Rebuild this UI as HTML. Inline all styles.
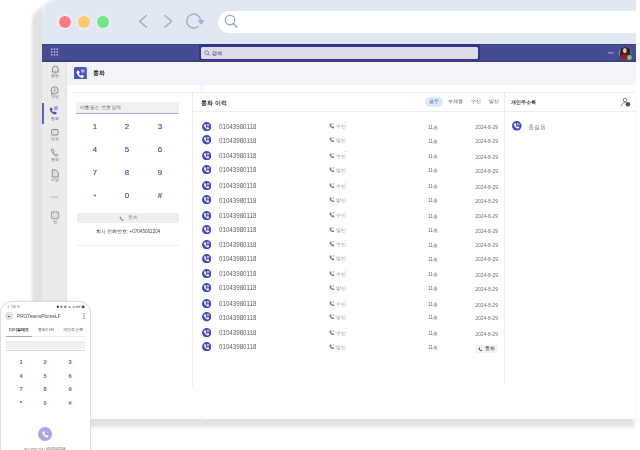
<!DOCTYPE html>
<html><head><meta charset="utf-8">
<style>
*{margin:0;padding:0;box-sizing:border-box}
html,body{width:640px;height:450px;overflow:hidden;background:#fff;font-family:"Liberation Sans",sans-serif}
.abs{position:absolute}
.t{position:absolute;white-space:nowrap;line-height:1;will-change:transform}
#win{position:absolute;left:42px;top:-1px;width:594.4px;height:420px;border-radius:14px 0 0 0;overflow:hidden;background:#fff}
#shadow{position:absolute;left:31.6px;top:6px;width:602px;height:421px;border-radius:16px 0 0 0;background:rgba(0,0,0,0.115);filter:blur(1.5px)}
#chrome{position:absolute;left:0;top:0;width:595px;height:45px;background:#e2e8f2}
.dot{position:absolute;width:12px;height:12px;border-radius:50%}
#addr{position:absolute;left:176px;top:11.6px;width:440px;height:22.3px;border-radius:11.2px;background:#fff}
#tbar{position:absolute;left:0;top:44.8px;width:595px;height:17.8px;background:#464b94;box-shadow:inset 0 1px 0 #3c408c, inset 0 -1.6px 0 #393d88}
#sbox{position:absolute;left:157px;top:0.4px;width:281px;height:16.2px;background:#30348a;border-radius:2px}
#sbox .in{position:absolute;left:2px;top:3.1px;right:2.4px;bottom:1.8px;background:#dcdbe7;border-radius:1.5px}
#rail{position:absolute;left:0;top:62.6px;width:24.9px;height:360px;background:#ebebeb;border-right:0.8px solid #e2e2e2}
#hdr{position:absolute;left:24.7px;top:62.6px;width:571px;height:23.2px;background:#f3f4f9;border-top:1px solid #fbfbfd}
</style></head><body>
<div id="all" style="position:absolute;left:0;top:0;width:640px;height:450px;filter:blur(0.3px)">
<div id="shadow"></div>
<div id="win">
  <div id="chrome">
    <div class="dot" style="left:17.4px;top:16.7px;background:#ff7985;box-shadow:0 0 0 1.5px #e8f4fa"></div>
    <div class="dot" style="left:36.2px;top:16.7px;background:#ffc86b;box-shadow:0 0 0 1.5px #e6eefa"></div>
    <div class="dot" style="left:55px;top:16.7px;background:#6ee884;box-shadow:0 0 0 1.5px #ebe8f8"></div>
    <div id="addr"></div>
  </div>
  <div id="tbar"><div id="sbox"><div class="in"></div></div></div>
  <div id="rail"></div>
  <div id="hdr"></div>
</div>
<svg class="abs" style="left:0;top:0" width="640" height="45">
<path d="M43.4 12 A12.6 12.6 0 0 1 55 0.4" fill="none" stroke="#f4f7fb" stroke-width="1.1" opacity="0.8"/>
<polyline points="146.4,15.5 139.6,21.35 146.4,27.2" fill="none" stroke="#a1b0cd" stroke-width="1.6" stroke-linecap="round" stroke-linejoin="round"/>
<polyline points="164.9,15.5 171.7,21.35 164.9,27.2" fill="none" stroke="#a1b0cd" stroke-width="1.6" stroke-linecap="round" stroke-linejoin="round"/>
<path d="M198.2 26.5 A7 7 0 1 1 200.7 20.4" fill="none" stroke="#a1b0cd" stroke-width="1.5" stroke-linecap="round"/>
<path d="M198 20.6 L204.3 20.6 L201.2 24.4 Z" fill="#a1b0cd" stroke="#a1b0cd" stroke-width="0.6" stroke-linejoin="round"/>
<circle cx="230" cy="20.1" r="4.7" fill="none" stroke="#9dadc9" stroke-width="1.4"/>
<line x1="233.4" y1="23.5" x2="237" y2="27.3" stroke="#9dadc9" stroke-width="1.5" stroke-linecap="round"/>
</svg>
<svg class="abs" style="left:0;top:0" width="640" height="62"><rect x="50.9" y="48.4" width="1.6" height="1.6" fill="#b3b6df"/><rect x="50.9" y="51.199999999999996" width="1.6" height="1.6" fill="#b3b6df"/><rect x="50.9" y="54.0" width="1.6" height="1.6" fill="#b3b6df"/><rect x="53.699999999999996" y="48.4" width="1.6" height="1.6" fill="#b3b6df"/><rect x="53.699999999999996" y="51.199999999999996" width="1.6" height="1.6" fill="#b3b6df"/><rect x="53.699999999999996" y="54.0" width="1.6" height="1.6" fill="#b3b6df"/><rect x="56.5" y="48.4" width="1.6" height="1.6" fill="#b3b6df"/><rect x="56.5" y="51.199999999999996" width="1.6" height="1.6" fill="#b3b6df"/><rect x="56.5" y="54.0" width="1.6" height="1.6" fill="#b3b6df"/>
<circle cx="206.6" cy="52.6" r="1.9" fill="none" stroke="#7f819f" stroke-width="0.9"/>
<line x1="208" y1="54" x2="209.6" y2="55.6" stroke="#7f819f" stroke-width="1"/>
<rect x="607.8" y="52.3" width="5.6" height="1.1" fill="#aeb1dc"/>
<defs><clipPath id="avc"><circle cx="625" cy="53.3" r="6.3"/></clipPath></defs>
<g clip-path="url(#avc)"><rect x="618" y="46" width="14" height="14" fill="#7d8290"/>
<path d="M619.5 60 L620.5 50 Q621 46.5 625 46.3 Q629.5 46.5 630 50 L631 60 Z" fill="#2e2220"/>
<ellipse cx="624.8" cy="50.6" rx="1.9" ry="2.6" fill="#e6c2ad"/>
<ellipse cx="624.8" cy="59.5" rx="5.8" ry="5" fill="#a51428"/></g>
<circle cx="629.4" cy="57.5" r="2.4" fill="#78d44e"/>
</svg>
<div class="t" style="left:212.3px;top:50.70px;font-size:5.2px;color:#5a5d96;font-weight:700;">검색</div>
<svg class="abs" style="left:0;top:0" width="70" height="240" fill="none" stroke="#7c7c7c" stroke-width="0.85">
<path d="M52.4 71.2 V69 a2.9 2.9 0 0 1 5.8 0 V71.2 l0.6 0.8 H51.8 z" fill="#e2e2e2"/><path d="M54.4 73 h2"/>
<circle cx="54.6" cy="90.4" r="3.6" fill="#e2e2e2"/><path d="M55.4 88.6 l-1.2 3.4" stroke-width="0.7"/><path d="M52.2 93.1 l-0.8 1.3 l1.6 -0.5"/>
<rect x="51.6" y="129.5" width="6.4" height="5.6" rx="1" fill="#d9d9d9"/><path d="M51.6 131.2 h6.4 M54.8 131.2 v3.9 M51.6 133.1 h6.4" stroke="#f2f2f2" stroke-width="0.5"/>
<path d="M52.3 148.8 c-0.9 0.4 -1.1 1.5 -0.6 2.6 c0.8 1.8 2 3.2 3.8 4.3 c0.9 0.5 2 0.4 2.3 -0.5 l-1.3 -1.1 l-1 0.6 c-0.9 -0.6 -1.6 -1.4 -2.1 -2.4 l0.7 -0.8 z"/>
<path d="M52.3 169.9 h3.3 l2.7 2.7 v4.4 h-6 z" fill="#dedede"/>
<rect x="51.4" y="211.8" width="7.2" height="6.8" rx="1.2" fill="#d5d5d5" stroke="#8a8a8a"/><path d="M55 211.8 v6.8 M51.4 215.2 h7.2" stroke="#f0f0f0" stroke-width="0.6"/>
</svg>
<svg class="abs" style="left:49.4px;top:106.4px" width="9" height="9" viewBox="0 0 10 10"><path d="M2.6 1.2c.5-.3 1.1-.1 1.4.4l.7 1.4c.2.5.1 1-.3 1.3l-.6.5c.4 1 1.2 1.9 2.2 2.4l.5-.6c.3-.4.9-.5 1.3-.3l1.4.7c.5.3.7.9.5 1.4-.4 1-1.5 1.6-2.6 1.3C4.5 9 1.9 6.4 1.3 3.9c-.3-1.1.3-2.2 1.3-2.7z" fill="#4e54c8" transform="translate(-0.3,0.6) scale(0.9)"/><rect x="6" y="0.7" width="1.5" height="1.5" fill="#5a5fd0"/><rect x="8" y="0.7" width="1.5" height="1.5" fill="#5a5fd0"/><rect x="6" y="2.7" width="1.5" height="1.5" fill="#5a5fd0"/><rect x="8" y="2.7" width="1.5" height="1.5" fill="#5a5fd0"/></svg>
<div class="abs" style="left:42px;top:103.3px;width:2.1px;height:21px;background:#5a5fd0"></div>
<div class="t" style="left:45.1px;width:20px;text-align:center;top:75.20px;font-size:3.6px;color:#7a7a7a;font-weight:400;">활동</div>
<div class="t" style="left:45.1px;width:20px;text-align:center;top:96.20px;font-size:3.6px;color:#7a7a7a;font-weight:400;">채팅</div>
<div class="t" style="left:45.1px;width:20px;text-align:center;top:117.60px;font-size:3.6px;color:#5a5fc8;font-weight:400;">통화</div>
<div class="t" style="left:45.1px;width:20px;text-align:center;top:138.10px;font-size:3.6px;color:#7a7a7a;font-weight:400;">일정</div>
<div class="t" style="left:45.1px;width:20px;text-align:center;top:158.70px;font-size:3.6px;color:#7a7a7a;font-weight:400;">통화</div>
<div class="t" style="left:45.1px;width:20px;text-align:center;top:179.40px;font-size:3.6px;color:#7a7a7a;font-weight:400;">파일</div>
<div class="t" style="left:45.1px;width:20px;text-align:center;top:221.00px;font-size:3.6px;color:#7a7a7a;font-weight:400;">앱</div>
<svg class="abs" style="left:51px;top:196px" width="9" height="3"><rect x="0.6" y="0.6" width="1.4" height="1" fill="#8a8a8a"/><rect x="3" y="0.6" width="1.4" height="1" fill="#8a8a8a"/><rect x="5.4" y="0.6" width="1.4" height="1" fill="#8a8a8a"/></svg>
<svg class="abs" style="left:74.2px;top:66.8px" width="12.8" height="12.6" viewBox="0 0 12.8 12.6"><rect width="12.8" height="12.6" rx="1.6" fill="#4b50c6"/><g transform="translate(1.6,2.6) scale(0.85)"><path d="M2.6 1.2c.5-.3 1.1-.1 1.4.4l.7 1.4c.2.5.1 1-.3 1.3l-.6.5c.4 1 1.2 1.9 2.2 2.4l.5-.6c.3-.4.9-.5 1.3-.3l1.4.7c.5.3.7.9.5 1.4-.4 1-1.5 1.6-2.6 1.3C4.5 9 1.9 6.4 1.3 3.9c-.3-1.1.3-2.2 1.3-2.7z" fill="#fff"/></g><rect x="7.1" y="2.4" width="3.4" height="3.1" fill="#aeb1ea"/></svg>
<div class="t" style="left:92.5px;top:70.00px;font-size:6.0px;color:#303030;font-weight:700;">통화</div>
<div class="abs" style="left:70px;top:91.6px;width:566px;height:0.8px;background:#efefef"></div>
<div class="abs" style="left:192.2px;top:91.8px;width:0.8px;height:294px;background:#ebebeb"></div>
<div class="abs" style="left:504.4px;top:91.8px;width:0.8px;height:293px;background:#ebebeb"></div>
<div class="abs" style="left:634.8px;top:91.8px;width:0.8px;height:327px;background:#f7f7f7"></div>
<div class="abs" style="left:200.5px;top:84.8px;width:0.6px;height:6.8px;background:#f0f0f0"></div>
<div class="abs" style="left:200.5px;top:415px;width:0.6px;height:4px;background:#f0f0f0"></div>
<div class="abs" style="left:76.4px;top:102.2px;width:102.4px;height:11.7px;background:#f1f1f1;border-bottom:1.8px solid #a9abe4"></div>
<div class="t" style="left:80.1px;top:105.55px;font-size:4.5px;color:#555;font-weight:400;transform:scaleX(0.93);transform-origin:0 50%">이름 또는 번호 입력</div>
<div class="t" style="left:89.1px;width:12px;text-align:center;top:122.65px;font-size:7.9px;color:#3a40aa;font-weight:400;-webkit-text-stroke:0.12px #3a40aa">1</div>
<div class="t" style="left:121.3px;width:12px;text-align:center;top:122.65px;font-size:7.9px;color:#3a40aa;font-weight:400;-webkit-text-stroke:0.12px #3a40aa">2</div>
<div class="t" style="left:153.6px;width:12px;text-align:center;top:122.65px;font-size:7.9px;color:#3a40aa;font-weight:400;-webkit-text-stroke:0.12px #3a40aa">3</div>
<div class="t" style="left:89.1px;width:12px;text-align:center;top:145.85px;font-size:7.9px;color:#3a40aa;font-weight:400;-webkit-text-stroke:0.12px #3a40aa">4</div>
<div class="t" style="left:121.3px;width:12px;text-align:center;top:145.85px;font-size:7.9px;color:#3a40aa;font-weight:400;-webkit-text-stroke:0.12px #3a40aa">5</div>
<div class="t" style="left:153.6px;width:12px;text-align:center;top:145.85px;font-size:7.9px;color:#3a40aa;font-weight:400;-webkit-text-stroke:0.12px #3a40aa">6</div>
<div class="t" style="left:89.1px;width:12px;text-align:center;top:169.15px;font-size:7.9px;color:#3a40aa;font-weight:400;-webkit-text-stroke:0.12px #3a40aa">7</div>
<div class="t" style="left:121.3px;width:12px;text-align:center;top:169.15px;font-size:7.9px;color:#3a40aa;font-weight:400;-webkit-text-stroke:0.12px #3a40aa">8</div>
<div class="t" style="left:153.6px;width:12px;text-align:center;top:169.15px;font-size:7.9px;color:#3a40aa;font-weight:400;-webkit-text-stroke:0.12px #3a40aa">9</div>
<div class="t" style="left:90.1px;width:10px;text-align:center;top:192.70px;font-size:7.4px;color:#3f45ad;font-weight:400;">*</div>
<div class="t" style="left:121.3px;width:12px;text-align:center;top:192.25px;font-size:7.9px;color:#3a40aa;font-weight:400;-webkit-text-stroke:0.12px #3a40aa">0</div>
<div class="t" style="left:153.6px;width:12px;text-align:center;top:192.25px;font-size:7.9px;color:#3a40aa;font-weight:400;-webkit-text-stroke:0.12px #3a40aa">#</div>
<div class="abs" style="left:76.5px;top:213.3px;width:102.6px;height:10px;background:#efefef"></div>
<svg class="abs" style="left:119.3px;top:215.6px" width="5" height="5" viewBox="0 0 10 10"><path d="M2.6 1.2c.5-.3 1.1-.1 1.4.4l.7 1.4c.2.5.1 1-.3 1.3l-.6.5c.4 1 1.2 1.9 2.2 2.4l.5-.6c.3-.4.9-.5 1.3-.3l1.4.7c.5.3.7.9.5 1.4-.4 1-1.5 1.6-2.6 1.3C4.5 9 1.9 6.4 1.3 3.9c-.3-1.1.3-2.2 1.3-2.7z" fill="#9a9a9a"/></svg>
<div class="t" style="left:128.0px;top:216.20px;font-size:4.6px;color:#9a9a9a;font-weight:400;">통화</div>
<div class="t" style="left:77.8px;width:100px;text-align:center;top:230.00px;font-size:4.6px;color:#4a4a4a;font-weight:400;">회사 전화번호: +07045062204</div>
<div class="abs" style="left:76.5px;top:245px;width:102.6px;height:0.7px;background:#ececec"></div>
<div class="t" style="left:201.3px;top:100.60px;font-size:5.6px;color:#333;font-weight:700;">통화 이력</div>
<div class="abs" style="left:425.2px;top:97px;width:17.6px;height:9.9px;border-radius:5px;background:#dbe8f7"></div>
<div class="t" style="left:424.0px;width:20px;text-align:center;top:100.35px;font-size:4.7px;color:#3e4a66;font-weight:400;">모두</div>
<div class="t" style="left:445.2px;width:20px;text-align:center;top:100.35px;font-size:4.7px;color:#4a4a4a;font-weight:400;">부재중</div>
<div class="t" style="left:466.0px;width:20px;text-align:center;top:100.35px;font-size:4.7px;color:#4a4a4a;font-weight:400;">수신</div>
<div class="t" style="left:484.4px;width:20px;text-align:center;top:100.35px;font-size:4.7px;color:#4a4a4a;font-weight:400;">발신</div>
<div class="abs" style="left:193px;top:110.6px;width:311px;height:0.7px;background:#ededed"></div>
<svg class="abs" style="left:201.8px;top:121.5px" width="9.4" height="9.4" viewBox="0 0 12 12"><circle cx="6" cy="6" r="6" fill="#474bc2"/><g transform="translate(1.6,1.9) scale(0.78)"><path d="M2.6 1.2c.5-.3 1.1-.1 1.4.4l.7 1.4c.2.5.1 1-.3 1.3l-.6.5c.4 1 1.2 1.9 2.2 2.4l.5-.6c.3-.4.9-.5 1.3-.3l1.4.7c.5.3.7.9.5 1.4-.4 1-1.5 1.6-2.6 1.3C4.5 9 1.9 6.4 1.3 3.9c-.3-1.1.3-2.2 1.3-2.7z" fill="#fff"/></g><rect x="6.3" y="2.6" width="1.3" height="1.3" fill="#cfd0f5"/><rect x="7.9" y="2.6" width="1.3" height="1.3" fill="#cfd0f5"/><rect x="6.3" y="4.2" width="1.3" height="1.3" fill="#cfd0f5"/><rect x="7.9" y="4.2" width="1.3" height="1.3" fill="#cfd0f5"/></svg>
<div class="t" style="left:218.8px;top:123.90px;font-size:6.2px;color:#606060;font-weight:400;transform:scaleY(1.18)">01043980118</div>
<svg class="abs" style="left:328.6px;top:123.20px" width="5.4" height="5.4" viewBox="0 0 10 10"><path d="M2.6 1.2c.5-.3 1.1-.1 1.4.4l.7 1.4c.2.5.1 1-.3 1.3l-.6.5c.4 1 1.2 1.9 2.2 2.4l.5-.6c.3-.4.9-.5 1.3-.3l1.4.7c.5.3.7.9.5 1.4-.4 1-1.5 1.6-2.6 1.3C4.5 9 1.9 6.4 1.3 3.9c-.3-1.1.3-2.2 1.3-2.7z" fill="#808080" stroke="#808080" stroke-width="0.6"/><path d="M7 1 L9.5 1 L9.5 3.5" fill="none" stroke="#808080" stroke-width="1.2"/></svg>
<div class="t" style="left:335.6px;top:124.25px;font-size:5.1px;color:#8a8a8a;font-weight:400;">수신</div>
<div class="abs" style="left:345.3px;top:122.00px;width:0.7px;height:1.2px;background:#c4c4c4"></div>
<div class="t" style="left:428.3px;top:125.65px;font-size:4.9px;color:#6a6a6a;font-weight:400;">11초</div>
<div class="t" style="left:438.4px;width:60px;text-align:right;top:125.20px;font-size:5.0px;color:#6e6e6e;font-weight:400">2024-8-29</div>
<svg class="abs" style="left:201.8px;top:135.4px" width="9.4" height="9.4" viewBox="0 0 12 12"><circle cx="6" cy="6" r="6" fill="#474bc2"/><g transform="translate(1.6,1.9) scale(0.78)"><path d="M2.6 1.2c.5-.3 1.1-.1 1.4.4l.7 1.4c.2.5.1 1-.3 1.3l-.6.5c.4 1 1.2 1.9 2.2 2.4l.5-.6c.3-.4.9-.5 1.3-.3l1.4.7c.5.3.7.9.5 1.4-.4 1-1.5 1.6-2.6 1.3C4.5 9 1.9 6.4 1.3 3.9c-.3-1.1.3-2.2 1.3-2.7z" fill="#fff"/></g><rect x="6.3" y="2.6" width="1.3" height="1.3" fill="#cfd0f5"/><rect x="7.9" y="2.6" width="1.3" height="1.3" fill="#cfd0f5"/><rect x="6.3" y="4.2" width="1.3" height="1.3" fill="#cfd0f5"/><rect x="7.9" y="4.2" width="1.3" height="1.3" fill="#cfd0f5"/></svg>
<div class="t" style="left:218.8px;top:137.80px;font-size:6.2px;color:#606060;font-weight:400;transform:scaleY(1.18)">01043980118</div>
<svg class="abs" style="left:328.6px;top:137.10px" width="5.4" height="5.4" viewBox="0 0 10 10"><path d="M2.6 1.2c.5-.3 1.1-.1 1.4.4l.7 1.4c.2.5.1 1-.3 1.3l-.6.5c.4 1 1.2 1.9 2.2 2.4l.5-.6c.3-.4.9-.5 1.3-.3l1.4.7c.5.3.7.9.5 1.4-.4 1-1.5 1.6-2.6 1.3C4.5 9 1.9 6.4 1.3 3.9c-.3-1.1.3-2.2 1.3-2.7z" fill="#808080" stroke="#808080" stroke-width="0.6"/><path d="M7 1 L9.5 1 L9.5 3.5" fill="none" stroke="#808080" stroke-width="1.2"/></svg>
<div class="t" style="left:335.6px;top:138.15px;font-size:5.1px;color:#8a8a8a;font-weight:400;">발신</div>
<div class="t" style="left:428.3px;top:139.55px;font-size:4.9px;color:#6a6a6a;font-weight:400;">11초</div>
<div class="t" style="left:438.4px;width:60px;text-align:right;top:139.10px;font-size:5.0px;color:#6e6e6e;font-weight:400">2024-8-29</div>
<svg class="abs" style="left:201.8px;top:150.8px" width="9.4" height="9.4" viewBox="0 0 12 12"><circle cx="6" cy="6" r="6" fill="#474bc2"/><g transform="translate(1.6,1.9) scale(0.78)"><path d="M2.6 1.2c.5-.3 1.1-.1 1.4.4l.7 1.4c.2.5.1 1-.3 1.3l-.6.5c.4 1 1.2 1.9 2.2 2.4l.5-.6c.3-.4.9-.5 1.3-.3l1.4.7c.5.3.7.9.5 1.4-.4 1-1.5 1.6-2.6 1.3C4.5 9 1.9 6.4 1.3 3.9c-.3-1.1.3-2.2 1.3-2.7z" fill="#fff"/></g><rect x="6.3" y="2.6" width="1.3" height="1.3" fill="#cfd0f5"/><rect x="7.9" y="2.6" width="1.3" height="1.3" fill="#cfd0f5"/><rect x="6.3" y="4.2" width="1.3" height="1.3" fill="#cfd0f5"/><rect x="7.9" y="4.2" width="1.3" height="1.3" fill="#cfd0f5"/></svg>
<div class="t" style="left:218.8px;top:153.20px;font-size:6.2px;color:#606060;font-weight:400;transform:scaleY(1.18)">01043980118</div>
<svg class="abs" style="left:328.6px;top:152.50px" width="5.4" height="5.4" viewBox="0 0 10 10"><path d="M2.6 1.2c.5-.3 1.1-.1 1.4.4l.7 1.4c.2.5.1 1-.3 1.3l-.6.5c.4 1 1.2 1.9 2.2 2.4l.5-.6c.3-.4.9-.5 1.3-.3l1.4.7c.5.3.7.9.5 1.4-.4 1-1.5 1.6-2.6 1.3C4.5 9 1.9 6.4 1.3 3.9c-.3-1.1.3-2.2 1.3-2.7z" fill="#808080" stroke="#808080" stroke-width="0.6"/><path d="M7 1 L9.5 1 L9.5 3.5" fill="none" stroke="#808080" stroke-width="1.2"/></svg>
<div class="t" style="left:335.6px;top:153.55px;font-size:5.1px;color:#8a8a8a;font-weight:400;">수신</div>
<div class="abs" style="left:345.3px;top:151.30px;width:0.7px;height:1.2px;background:#c4c4c4"></div>
<div class="t" style="left:428.3px;top:154.95px;font-size:4.9px;color:#6a6a6a;font-weight:400;">11초</div>
<div class="t" style="left:438.4px;width:60px;text-align:right;top:154.50px;font-size:5.0px;color:#6e6e6e;font-weight:400">2024-8-29</div>
<svg class="abs" style="left:201.8px;top:165.0px" width="9.4" height="9.4" viewBox="0 0 12 12"><circle cx="6" cy="6" r="6" fill="#474bc2"/><g transform="translate(1.6,1.9) scale(0.78)"><path d="M2.6 1.2c.5-.3 1.1-.1 1.4.4l.7 1.4c.2.5.1 1-.3 1.3l-.6.5c.4 1 1.2 1.9 2.2 2.4l.5-.6c.3-.4.9-.5 1.3-.3l1.4.7c.5.3.7.9.5 1.4-.4 1-1.5 1.6-2.6 1.3C4.5 9 1.9 6.4 1.3 3.9c-.3-1.1.3-2.2 1.3-2.7z" fill="#fff"/></g><rect x="6.3" y="2.6" width="1.3" height="1.3" fill="#cfd0f5"/><rect x="7.9" y="2.6" width="1.3" height="1.3" fill="#cfd0f5"/><rect x="6.3" y="4.2" width="1.3" height="1.3" fill="#cfd0f5"/><rect x="7.9" y="4.2" width="1.3" height="1.3" fill="#cfd0f5"/></svg>
<div class="t" style="left:218.8px;top:167.40px;font-size:6.2px;color:#606060;font-weight:400;transform:scaleY(1.18)">01043980118</div>
<svg class="abs" style="left:328.6px;top:166.70px" width="5.4" height="5.4" viewBox="0 0 10 10"><path d="M2.6 1.2c.5-.3 1.1-.1 1.4.4l.7 1.4c.2.5.1 1-.3 1.3l-.6.5c.4 1 1.2 1.9 2.2 2.4l.5-.6c.3-.4.9-.5 1.3-.3l1.4.7c.5.3.7.9.5 1.4-.4 1-1.5 1.6-2.6 1.3C4.5 9 1.9 6.4 1.3 3.9c-.3-1.1.3-2.2 1.3-2.7z" fill="#808080" stroke="#808080" stroke-width="0.6"/><path d="M7 1 L9.5 1 L9.5 3.5" fill="none" stroke="#808080" stroke-width="1.2"/></svg>
<div class="t" style="left:335.6px;top:167.75px;font-size:5.1px;color:#8a8a8a;font-weight:400;">발신</div>
<div class="t" style="left:428.3px;top:169.15px;font-size:4.9px;color:#6a6a6a;font-weight:400;">11초</div>
<div class="t" style="left:438.4px;width:60px;text-align:right;top:168.70px;font-size:5.0px;color:#6e6e6e;font-weight:400">2024-8-29</div>
<svg class="abs" style="left:201.8px;top:181.0px" width="9.4" height="9.4" viewBox="0 0 12 12"><circle cx="6" cy="6" r="6" fill="#474bc2"/><g transform="translate(1.6,1.9) scale(0.78)"><path d="M2.6 1.2c.5-.3 1.1-.1 1.4.4l.7 1.4c.2.5.1 1-.3 1.3l-.6.5c.4 1 1.2 1.9 2.2 2.4l.5-.6c.3-.4.9-.5 1.3-.3l1.4.7c.5.3.7.9.5 1.4-.4 1-1.5 1.6-2.6 1.3C4.5 9 1.9 6.4 1.3 3.9c-.3-1.1.3-2.2 1.3-2.7z" fill="#fff"/></g><rect x="6.3" y="2.6" width="1.3" height="1.3" fill="#cfd0f5"/><rect x="7.9" y="2.6" width="1.3" height="1.3" fill="#cfd0f5"/><rect x="6.3" y="4.2" width="1.3" height="1.3" fill="#cfd0f5"/><rect x="7.9" y="4.2" width="1.3" height="1.3" fill="#cfd0f5"/></svg>
<div class="t" style="left:218.8px;top:183.40px;font-size:6.2px;color:#606060;font-weight:400;transform:scaleY(1.18)">01043980118</div>
<svg class="abs" style="left:328.6px;top:182.70px" width="5.4" height="5.4" viewBox="0 0 10 10"><path d="M2.6 1.2c.5-.3 1.1-.1 1.4.4l.7 1.4c.2.5.1 1-.3 1.3l-.6.5c.4 1 1.2 1.9 2.2 2.4l.5-.6c.3-.4.9-.5 1.3-.3l1.4.7c.5.3.7.9.5 1.4-.4 1-1.5 1.6-2.6 1.3C4.5 9 1.9 6.4 1.3 3.9c-.3-1.1.3-2.2 1.3-2.7z" fill="#808080" stroke="#808080" stroke-width="0.6"/><path d="M7 1 L9.5 1 L9.5 3.5" fill="none" stroke="#808080" stroke-width="1.2"/></svg>
<div class="t" style="left:335.6px;top:183.75px;font-size:5.1px;color:#8a8a8a;font-weight:400;">수신</div>
<div class="abs" style="left:345.3px;top:181.50px;width:0.7px;height:1.2px;background:#c4c4c4"></div>
<div class="t" style="left:428.3px;top:185.15px;font-size:4.9px;color:#6a6a6a;font-weight:400;">11초</div>
<div class="t" style="left:438.4px;width:60px;text-align:right;top:184.70px;font-size:5.0px;color:#6e6e6e;font-weight:400">2024-8-29</div>
<svg class="abs" style="left:201.8px;top:195.10000000000002px" width="9.4" height="9.4" viewBox="0 0 12 12"><circle cx="6" cy="6" r="6" fill="#474bc2"/><g transform="translate(1.6,1.9) scale(0.78)"><path d="M2.6 1.2c.5-.3 1.1-.1 1.4.4l.7 1.4c.2.5.1 1-.3 1.3l-.6.5c.4 1 1.2 1.9 2.2 2.4l.5-.6c.3-.4.9-.5 1.3-.3l1.4.7c.5.3.7.9.5 1.4-.4 1-1.5 1.6-2.6 1.3C4.5 9 1.9 6.4 1.3 3.9c-.3-1.1.3-2.2 1.3-2.7z" fill="#fff"/></g><rect x="6.3" y="2.6" width="1.3" height="1.3" fill="#cfd0f5"/><rect x="7.9" y="2.6" width="1.3" height="1.3" fill="#cfd0f5"/><rect x="6.3" y="4.2" width="1.3" height="1.3" fill="#cfd0f5"/><rect x="7.9" y="4.2" width="1.3" height="1.3" fill="#cfd0f5"/></svg>
<div class="t" style="left:218.8px;top:197.50px;font-size:6.2px;color:#606060;font-weight:400;transform:scaleY(1.18)">01043980118</div>
<svg class="abs" style="left:328.6px;top:196.80px" width="5.4" height="5.4" viewBox="0 0 10 10"><path d="M2.6 1.2c.5-.3 1.1-.1 1.4.4l.7 1.4c.2.5.1 1-.3 1.3l-.6.5c.4 1 1.2 1.9 2.2 2.4l.5-.6c.3-.4.9-.5 1.3-.3l1.4.7c.5.3.7.9.5 1.4-.4 1-1.5 1.6-2.6 1.3C4.5 9 1.9 6.4 1.3 3.9c-.3-1.1.3-2.2 1.3-2.7z" fill="#808080" stroke="#808080" stroke-width="0.6"/><path d="M7 1 L9.5 1 L9.5 3.5" fill="none" stroke="#808080" stroke-width="1.2"/></svg>
<div class="t" style="left:335.6px;top:197.85px;font-size:5.1px;color:#8a8a8a;font-weight:400;">발신</div>
<div class="t" style="left:428.3px;top:199.25px;font-size:4.9px;color:#6a6a6a;font-weight:400;">11초</div>
<div class="t" style="left:438.4px;width:60px;text-align:right;top:198.80px;font-size:5.0px;color:#6e6e6e;font-weight:400">2024-8-29</div>
<svg class="abs" style="left:201.8px;top:210.5px" width="9.4" height="9.4" viewBox="0 0 12 12"><circle cx="6" cy="6" r="6" fill="#474bc2"/><g transform="translate(1.6,1.9) scale(0.78)"><path d="M2.6 1.2c.5-.3 1.1-.1 1.4.4l.7 1.4c.2.5.1 1-.3 1.3l-.6.5c.4 1 1.2 1.9 2.2 2.4l.5-.6c.3-.4.9-.5 1.3-.3l1.4.7c.5.3.7.9.5 1.4-.4 1-1.5 1.6-2.6 1.3C4.5 9 1.9 6.4 1.3 3.9c-.3-1.1.3-2.2 1.3-2.7z" fill="#fff"/></g><rect x="6.3" y="2.6" width="1.3" height="1.3" fill="#cfd0f5"/><rect x="7.9" y="2.6" width="1.3" height="1.3" fill="#cfd0f5"/><rect x="6.3" y="4.2" width="1.3" height="1.3" fill="#cfd0f5"/><rect x="7.9" y="4.2" width="1.3" height="1.3" fill="#cfd0f5"/></svg>
<div class="t" style="left:218.8px;top:212.90px;font-size:6.2px;color:#606060;font-weight:400;transform:scaleY(1.18)">01043980118</div>
<svg class="abs" style="left:328.6px;top:212.20px" width="5.4" height="5.4" viewBox="0 0 10 10"><path d="M2.6 1.2c.5-.3 1.1-.1 1.4.4l.7 1.4c.2.5.1 1-.3 1.3l-.6.5c.4 1 1.2 1.9 2.2 2.4l.5-.6c.3-.4.9-.5 1.3-.3l1.4.7c.5.3.7.9.5 1.4-.4 1-1.5 1.6-2.6 1.3C4.5 9 1.9 6.4 1.3 3.9c-.3-1.1.3-2.2 1.3-2.7z" fill="#808080" stroke="#808080" stroke-width="0.6"/><path d="M7 1 L9.5 1 L9.5 3.5" fill="none" stroke="#808080" stroke-width="1.2"/></svg>
<div class="t" style="left:335.6px;top:213.25px;font-size:5.1px;color:#8a8a8a;font-weight:400;">수신</div>
<div class="abs" style="left:345.3px;top:211.00px;width:0.7px;height:1.2px;background:#c4c4c4"></div>
<div class="t" style="left:428.3px;top:214.65px;font-size:4.9px;color:#6a6a6a;font-weight:400;">11초</div>
<div class="t" style="left:438.4px;width:60px;text-align:right;top:214.20px;font-size:5.0px;color:#6e6e6e;font-weight:400">2024-8-29</div>
<svg class="abs" style="left:201.8px;top:224.8px" width="9.4" height="9.4" viewBox="0 0 12 12"><circle cx="6" cy="6" r="6" fill="#474bc2"/><g transform="translate(1.6,1.9) scale(0.78)"><path d="M2.6 1.2c.5-.3 1.1-.1 1.4.4l.7 1.4c.2.5.1 1-.3 1.3l-.6.5c.4 1 1.2 1.9 2.2 2.4l.5-.6c.3-.4.9-.5 1.3-.3l1.4.7c.5.3.7.9.5 1.4-.4 1-1.5 1.6-2.6 1.3C4.5 9 1.9 6.4 1.3 3.9c-.3-1.1.3-2.2 1.3-2.7z" fill="#fff"/></g><rect x="6.3" y="2.6" width="1.3" height="1.3" fill="#cfd0f5"/><rect x="7.9" y="2.6" width="1.3" height="1.3" fill="#cfd0f5"/><rect x="6.3" y="4.2" width="1.3" height="1.3" fill="#cfd0f5"/><rect x="7.9" y="4.2" width="1.3" height="1.3" fill="#cfd0f5"/></svg>
<div class="t" style="left:218.8px;top:227.20px;font-size:6.2px;color:#606060;font-weight:400;transform:scaleY(1.18)">01043980118</div>
<svg class="abs" style="left:328.6px;top:226.50px" width="5.4" height="5.4" viewBox="0 0 10 10"><path d="M2.6 1.2c.5-.3 1.1-.1 1.4.4l.7 1.4c.2.5.1 1-.3 1.3l-.6.5c.4 1 1.2 1.9 2.2 2.4l.5-.6c.3-.4.9-.5 1.3-.3l1.4.7c.5.3.7.9.5 1.4-.4 1-1.5 1.6-2.6 1.3C4.5 9 1.9 6.4 1.3 3.9c-.3-1.1.3-2.2 1.3-2.7z" fill="#808080" stroke="#808080" stroke-width="0.6"/><path d="M7 1 L9.5 1 L9.5 3.5" fill="none" stroke="#808080" stroke-width="1.2"/></svg>
<div class="t" style="left:335.6px;top:227.55px;font-size:5.1px;color:#8a8a8a;font-weight:400;">발신</div>
<div class="t" style="left:428.3px;top:228.95px;font-size:4.9px;color:#6a6a6a;font-weight:400;">11초</div>
<div class="t" style="left:438.4px;width:60px;text-align:right;top:228.50px;font-size:5.0px;color:#6e6e6e;font-weight:400">2024-8-29</div>
<svg class="abs" style="left:201.8px;top:239.60000000000002px" width="9.4" height="9.4" viewBox="0 0 12 12"><circle cx="6" cy="6" r="6" fill="#474bc2"/><g transform="translate(1.6,1.9) scale(0.78)"><path d="M2.6 1.2c.5-.3 1.1-.1 1.4.4l.7 1.4c.2.5.1 1-.3 1.3l-.6.5c.4 1 1.2 1.9 2.2 2.4l.5-.6c.3-.4.9-.5 1.3-.3l1.4.7c.5.3.7.9.5 1.4-.4 1-1.5 1.6-2.6 1.3C4.5 9 1.9 6.4 1.3 3.9c-.3-1.1.3-2.2 1.3-2.7z" fill="#fff"/></g><rect x="6.3" y="2.6" width="1.3" height="1.3" fill="#cfd0f5"/><rect x="7.9" y="2.6" width="1.3" height="1.3" fill="#cfd0f5"/><rect x="6.3" y="4.2" width="1.3" height="1.3" fill="#cfd0f5"/><rect x="7.9" y="4.2" width="1.3" height="1.3" fill="#cfd0f5"/></svg>
<div class="t" style="left:218.8px;top:242.00px;font-size:6.2px;color:#606060;font-weight:400;transform:scaleY(1.18)">01043980118</div>
<svg class="abs" style="left:328.6px;top:241.30px" width="5.4" height="5.4" viewBox="0 0 10 10"><path d="M2.6 1.2c.5-.3 1.1-.1 1.4.4l.7 1.4c.2.5.1 1-.3 1.3l-.6.5c.4 1 1.2 1.9 2.2 2.4l.5-.6c.3-.4.9-.5 1.3-.3l1.4.7c.5.3.7.9.5 1.4-.4 1-1.5 1.6-2.6 1.3C4.5 9 1.9 6.4 1.3 3.9c-.3-1.1.3-2.2 1.3-2.7z" fill="#808080" stroke="#808080" stroke-width="0.6"/><path d="M7 1 L9.5 1 L9.5 3.5" fill="none" stroke="#808080" stroke-width="1.2"/></svg>
<div class="t" style="left:335.6px;top:242.35px;font-size:5.1px;color:#8a8a8a;font-weight:400;">수신</div>
<div class="abs" style="left:345.3px;top:240.10px;width:0.7px;height:1.2px;background:#c4c4c4"></div>
<div class="t" style="left:428.3px;top:243.75px;font-size:4.9px;color:#6a6a6a;font-weight:400;">11초</div>
<div class="t" style="left:438.4px;width:60px;text-align:right;top:243.30px;font-size:5.0px;color:#6e6e6e;font-weight:400">2024-8-29</div>
<svg class="abs" style="left:201.8px;top:253.60000000000002px" width="9.4" height="9.4" viewBox="0 0 12 12"><circle cx="6" cy="6" r="6" fill="#474bc2"/><g transform="translate(1.6,1.9) scale(0.78)"><path d="M2.6 1.2c.5-.3 1.1-.1 1.4.4l.7 1.4c.2.5.1 1-.3 1.3l-.6.5c.4 1 1.2 1.9 2.2 2.4l.5-.6c.3-.4.9-.5 1.3-.3l1.4.7c.5.3.7.9.5 1.4-.4 1-1.5 1.6-2.6 1.3C4.5 9 1.9 6.4 1.3 3.9c-.3-1.1.3-2.2 1.3-2.7z" fill="#fff"/></g><rect x="6.3" y="2.6" width="1.3" height="1.3" fill="#cfd0f5"/><rect x="7.9" y="2.6" width="1.3" height="1.3" fill="#cfd0f5"/><rect x="6.3" y="4.2" width="1.3" height="1.3" fill="#cfd0f5"/><rect x="7.9" y="4.2" width="1.3" height="1.3" fill="#cfd0f5"/></svg>
<div class="t" style="left:218.8px;top:256.00px;font-size:6.2px;color:#606060;font-weight:400;transform:scaleY(1.18)">01043980118</div>
<svg class="abs" style="left:328.6px;top:255.30px" width="5.4" height="5.4" viewBox="0 0 10 10"><path d="M2.6 1.2c.5-.3 1.1-.1 1.4.4l.7 1.4c.2.5.1 1-.3 1.3l-.6.5c.4 1 1.2 1.9 2.2 2.4l.5-.6c.3-.4.9-.5 1.3-.3l1.4.7c.5.3.7.9.5 1.4-.4 1-1.5 1.6-2.6 1.3C4.5 9 1.9 6.4 1.3 3.9c-.3-1.1.3-2.2 1.3-2.7z" fill="#808080" stroke="#808080" stroke-width="0.6"/><path d="M7 1 L9.5 1 L9.5 3.5" fill="none" stroke="#808080" stroke-width="1.2"/></svg>
<div class="t" style="left:335.6px;top:256.35px;font-size:5.1px;color:#8a8a8a;font-weight:400;">발신</div>
<div class="t" style="left:428.3px;top:257.75px;font-size:4.9px;color:#6a6a6a;font-weight:400;">11초</div>
<div class="t" style="left:438.4px;width:60px;text-align:right;top:257.30px;font-size:5.0px;color:#6e6e6e;font-weight:400">2024-8-29</div>
<svg class="abs" style="left:201.8px;top:269.0px" width="9.4" height="9.4" viewBox="0 0 12 12"><circle cx="6" cy="6" r="6" fill="#474bc2"/><g transform="translate(1.6,1.9) scale(0.78)"><path d="M2.6 1.2c.5-.3 1.1-.1 1.4.4l.7 1.4c.2.5.1 1-.3 1.3l-.6.5c.4 1 1.2 1.9 2.2 2.4l.5-.6c.3-.4.9-.5 1.3-.3l1.4.7c.5.3.7.9.5 1.4-.4 1-1.5 1.6-2.6 1.3C4.5 9 1.9 6.4 1.3 3.9c-.3-1.1.3-2.2 1.3-2.7z" fill="#fff"/></g><rect x="6.3" y="2.6" width="1.3" height="1.3" fill="#cfd0f5"/><rect x="7.9" y="2.6" width="1.3" height="1.3" fill="#cfd0f5"/><rect x="6.3" y="4.2" width="1.3" height="1.3" fill="#cfd0f5"/><rect x="7.9" y="4.2" width="1.3" height="1.3" fill="#cfd0f5"/></svg>
<div class="t" style="left:218.8px;top:271.40px;font-size:6.2px;color:#606060;font-weight:400;transform:scaleY(1.18)">01043980118</div>
<svg class="abs" style="left:328.6px;top:270.70px" width="5.4" height="5.4" viewBox="0 0 10 10"><path d="M2.6 1.2c.5-.3 1.1-.1 1.4.4l.7 1.4c.2.5.1 1-.3 1.3l-.6.5c.4 1 1.2 1.9 2.2 2.4l.5-.6c.3-.4.9-.5 1.3-.3l1.4.7c.5.3.7.9.5 1.4-.4 1-1.5 1.6-2.6 1.3C4.5 9 1.9 6.4 1.3 3.9c-.3-1.1.3-2.2 1.3-2.7z" fill="#808080" stroke="#808080" stroke-width="0.6"/><path d="M7 1 L9.5 1 L9.5 3.5" fill="none" stroke="#808080" stroke-width="1.2"/></svg>
<div class="t" style="left:335.6px;top:271.75px;font-size:5.1px;color:#8a8a8a;font-weight:400;">수신</div>
<div class="abs" style="left:345.3px;top:269.50px;width:0.7px;height:1.2px;background:#c4c4c4"></div>
<div class="t" style="left:428.3px;top:273.15px;font-size:4.9px;color:#6a6a6a;font-weight:400;">11초</div>
<div class="t" style="left:438.4px;width:60px;text-align:right;top:272.70px;font-size:5.0px;color:#6e6e6e;font-weight:400">2024-8-29</div>
<svg class="abs" style="left:201.8px;top:282.8px" width="9.4" height="9.4" viewBox="0 0 12 12"><circle cx="6" cy="6" r="6" fill="#474bc2"/><g transform="translate(1.6,1.9) scale(0.78)"><path d="M2.6 1.2c.5-.3 1.1-.1 1.4.4l.7 1.4c.2.5.1 1-.3 1.3l-.6.5c.4 1 1.2 1.9 2.2 2.4l.5-.6c.3-.4.9-.5 1.3-.3l1.4.7c.5.3.7.9.5 1.4-.4 1-1.5 1.6-2.6 1.3C4.5 9 1.9 6.4 1.3 3.9c-.3-1.1.3-2.2 1.3-2.7z" fill="#fff"/></g><rect x="6.3" y="2.6" width="1.3" height="1.3" fill="#cfd0f5"/><rect x="7.9" y="2.6" width="1.3" height="1.3" fill="#cfd0f5"/><rect x="6.3" y="4.2" width="1.3" height="1.3" fill="#cfd0f5"/><rect x="7.9" y="4.2" width="1.3" height="1.3" fill="#cfd0f5"/></svg>
<div class="t" style="left:218.8px;top:285.20px;font-size:6.2px;color:#606060;font-weight:400;transform:scaleY(1.18)">01043980118</div>
<svg class="abs" style="left:328.6px;top:284.50px" width="5.4" height="5.4" viewBox="0 0 10 10"><path d="M2.6 1.2c.5-.3 1.1-.1 1.4.4l.7 1.4c.2.5.1 1-.3 1.3l-.6.5c.4 1 1.2 1.9 2.2 2.4l.5-.6c.3-.4.9-.5 1.3-.3l1.4.7c.5.3.7.9.5 1.4-.4 1-1.5 1.6-2.6 1.3C4.5 9 1.9 6.4 1.3 3.9c-.3-1.1.3-2.2 1.3-2.7z" fill="#808080" stroke="#808080" stroke-width="0.6"/><path d="M7 1 L9.5 1 L9.5 3.5" fill="none" stroke="#808080" stroke-width="1.2"/></svg>
<div class="t" style="left:335.6px;top:285.55px;font-size:5.1px;color:#8a8a8a;font-weight:400;">발신</div>
<div class="t" style="left:428.3px;top:286.95px;font-size:4.9px;color:#6a6a6a;font-weight:400;">11초</div>
<div class="t" style="left:438.4px;width:60px;text-align:right;top:286.50px;font-size:5.0px;color:#6e6e6e;font-weight:400">2024-8-29</div>
<svg class="abs" style="left:201.8px;top:299.0px" width="9.4" height="9.4" viewBox="0 0 12 12"><circle cx="6" cy="6" r="6" fill="#474bc2"/><g transform="translate(1.6,1.9) scale(0.78)"><path d="M2.6 1.2c.5-.3 1.1-.1 1.4.4l.7 1.4c.2.5.1 1-.3 1.3l-.6.5c.4 1 1.2 1.9 2.2 2.4l.5-.6c.3-.4.9-.5 1.3-.3l1.4.7c.5.3.7.9.5 1.4-.4 1-1.5 1.6-2.6 1.3C4.5 9 1.9 6.4 1.3 3.9c-.3-1.1.3-2.2 1.3-2.7z" fill="#fff"/></g><rect x="6.3" y="2.6" width="1.3" height="1.3" fill="#cfd0f5"/><rect x="7.9" y="2.6" width="1.3" height="1.3" fill="#cfd0f5"/><rect x="6.3" y="4.2" width="1.3" height="1.3" fill="#cfd0f5"/><rect x="7.9" y="4.2" width="1.3" height="1.3" fill="#cfd0f5"/></svg>
<div class="t" style="left:218.8px;top:301.40px;font-size:6.2px;color:#606060;font-weight:400;transform:scaleY(1.18)">01043980118</div>
<svg class="abs" style="left:328.6px;top:300.70px" width="5.4" height="5.4" viewBox="0 0 10 10"><path d="M2.6 1.2c.5-.3 1.1-.1 1.4.4l.7 1.4c.2.5.1 1-.3 1.3l-.6.5c.4 1 1.2 1.9 2.2 2.4l.5-.6c.3-.4.9-.5 1.3-.3l1.4.7c.5.3.7.9.5 1.4-.4 1-1.5 1.6-2.6 1.3C4.5 9 1.9 6.4 1.3 3.9c-.3-1.1.3-2.2 1.3-2.7z" fill="#808080" stroke="#808080" stroke-width="0.6"/><path d="M7 1 L9.5 1 L9.5 3.5" fill="none" stroke="#808080" stroke-width="1.2"/></svg>
<div class="t" style="left:335.6px;top:301.75px;font-size:5.1px;color:#8a8a8a;font-weight:400;">수신</div>
<div class="abs" style="left:345.3px;top:299.50px;width:0.7px;height:1.2px;background:#c4c4c4"></div>
<div class="t" style="left:428.3px;top:303.15px;font-size:4.9px;color:#6a6a6a;font-weight:400;">11초</div>
<div class="t" style="left:438.4px;width:60px;text-align:right;top:302.70px;font-size:5.0px;color:#6e6e6e;font-weight:400">2024-8-29</div>
<svg class="abs" style="left:201.8px;top:312.3px" width="9.4" height="9.4" viewBox="0 0 12 12"><circle cx="6" cy="6" r="6" fill="#474bc2"/><g transform="translate(1.6,1.9) scale(0.78)"><path d="M2.6 1.2c.5-.3 1.1-.1 1.4.4l.7 1.4c.2.5.1 1-.3 1.3l-.6.5c.4 1 1.2 1.9 2.2 2.4l.5-.6c.3-.4.9-.5 1.3-.3l1.4.7c.5.3.7.9.5 1.4-.4 1-1.5 1.6-2.6 1.3C4.5 9 1.9 6.4 1.3 3.9c-.3-1.1.3-2.2 1.3-2.7z" fill="#fff"/></g><rect x="6.3" y="2.6" width="1.3" height="1.3" fill="#cfd0f5"/><rect x="7.9" y="2.6" width="1.3" height="1.3" fill="#cfd0f5"/><rect x="6.3" y="4.2" width="1.3" height="1.3" fill="#cfd0f5"/><rect x="7.9" y="4.2" width="1.3" height="1.3" fill="#cfd0f5"/></svg>
<div class="t" style="left:218.8px;top:314.70px;font-size:6.2px;color:#606060;font-weight:400;transform:scaleY(1.18)">01043980118</div>
<svg class="abs" style="left:328.6px;top:314.00px" width="5.4" height="5.4" viewBox="0 0 10 10"><path d="M2.6 1.2c.5-.3 1.1-.1 1.4.4l.7 1.4c.2.5.1 1-.3 1.3l-.6.5c.4 1 1.2 1.9 2.2 2.4l.5-.6c.3-.4.9-.5 1.3-.3l1.4.7c.5.3.7.9.5 1.4-.4 1-1.5 1.6-2.6 1.3C4.5 9 1.9 6.4 1.3 3.9c-.3-1.1.3-2.2 1.3-2.7z" fill="#808080" stroke="#808080" stroke-width="0.6"/><path d="M7 1 L9.5 1 L9.5 3.5" fill="none" stroke="#808080" stroke-width="1.2"/></svg>
<div class="t" style="left:335.6px;top:315.05px;font-size:5.1px;color:#8a8a8a;font-weight:400;">발신</div>
<div class="t" style="left:428.3px;top:316.45px;font-size:4.9px;color:#6a6a6a;font-weight:400;">11초</div>
<div class="t" style="left:438.4px;width:60px;text-align:right;top:316.00px;font-size:5.0px;color:#6e6e6e;font-weight:400">2024-8-29</div>
<svg class="abs" style="left:201.8px;top:327.8px" width="9.4" height="9.4" viewBox="0 0 12 12"><circle cx="6" cy="6" r="6" fill="#474bc2"/><g transform="translate(1.6,1.9) scale(0.78)"><path d="M2.6 1.2c.5-.3 1.1-.1 1.4.4l.7 1.4c.2.5.1 1-.3 1.3l-.6.5c.4 1 1.2 1.9 2.2 2.4l.5-.6c.3-.4.9-.5 1.3-.3l1.4.7c.5.3.7.9.5 1.4-.4 1-1.5 1.6-2.6 1.3C4.5 9 1.9 6.4 1.3 3.9c-.3-1.1.3-2.2 1.3-2.7z" fill="#fff"/></g><rect x="6.3" y="2.6" width="1.3" height="1.3" fill="#cfd0f5"/><rect x="7.9" y="2.6" width="1.3" height="1.3" fill="#cfd0f5"/><rect x="6.3" y="4.2" width="1.3" height="1.3" fill="#cfd0f5"/><rect x="7.9" y="4.2" width="1.3" height="1.3" fill="#cfd0f5"/></svg>
<div class="t" style="left:218.8px;top:330.20px;font-size:6.2px;color:#606060;font-weight:400;transform:scaleY(1.18)">01043980118</div>
<svg class="abs" style="left:328.6px;top:329.50px" width="5.4" height="5.4" viewBox="0 0 10 10"><path d="M2.6 1.2c.5-.3 1.1-.1 1.4.4l.7 1.4c.2.5.1 1-.3 1.3l-.6.5c.4 1 1.2 1.9 2.2 2.4l.5-.6c.3-.4.9-.5 1.3-.3l1.4.7c.5.3.7.9.5 1.4-.4 1-1.5 1.6-2.6 1.3C4.5 9 1.9 6.4 1.3 3.9c-.3-1.1.3-2.2 1.3-2.7z" fill="#808080" stroke="#808080" stroke-width="0.6"/><path d="M7 1 L9.5 1 L9.5 3.5" fill="none" stroke="#808080" stroke-width="1.2"/></svg>
<div class="t" style="left:335.6px;top:330.55px;font-size:5.1px;color:#8a8a8a;font-weight:400;">수신</div>
<div class="abs" style="left:345.3px;top:328.30px;width:0.7px;height:1.2px;background:#c4c4c4"></div>
<div class="t" style="left:428.3px;top:331.95px;font-size:4.9px;color:#6a6a6a;font-weight:400;">11초</div>
<div class="t" style="left:438.4px;width:60px;text-align:right;top:331.50px;font-size:5.0px;color:#6e6e6e;font-weight:400">2024-8-29</div>
<svg class="abs" style="left:201.8px;top:342.0px" width="9.4" height="9.4" viewBox="0 0 12 12"><circle cx="6" cy="6" r="6" fill="#474bc2"/><g transform="translate(1.6,1.9) scale(0.78)"><path d="M2.6 1.2c.5-.3 1.1-.1 1.4.4l.7 1.4c.2.5.1 1-.3 1.3l-.6.5c.4 1 1.2 1.9 2.2 2.4l.5-.6c.3-.4.9-.5 1.3-.3l1.4.7c.5.3.7.9.5 1.4-.4 1-1.5 1.6-2.6 1.3C4.5 9 1.9 6.4 1.3 3.9c-.3-1.1.3-2.2 1.3-2.7z" fill="#fff"/></g><rect x="6.3" y="2.6" width="1.3" height="1.3" fill="#cfd0f5"/><rect x="7.9" y="2.6" width="1.3" height="1.3" fill="#cfd0f5"/><rect x="6.3" y="4.2" width="1.3" height="1.3" fill="#cfd0f5"/><rect x="7.9" y="4.2" width="1.3" height="1.3" fill="#cfd0f5"/></svg>
<div class="t" style="left:218.8px;top:344.40px;font-size:6.2px;color:#606060;font-weight:400;transform:scaleY(1.18)">01043980118</div>
<svg class="abs" style="left:328.6px;top:343.70px" width="5.4" height="5.4" viewBox="0 0 10 10"><path d="M2.6 1.2c.5-.3 1.1-.1 1.4.4l.7 1.4c.2.5.1 1-.3 1.3l-.6.5c.4 1 1.2 1.9 2.2 2.4l.5-.6c.3-.4.9-.5 1.3-.3l1.4.7c.5.3.7.9.5 1.4-.4 1-1.5 1.6-2.6 1.3C4.5 9 1.9 6.4 1.3 3.9c-.3-1.1.3-2.2 1.3-2.7z" fill="#808080" stroke="#808080" stroke-width="0.6"/><path d="M7 1 L9.5 1 L9.5 3.5" fill="none" stroke="#808080" stroke-width="1.2"/></svg>
<div class="t" style="left:335.6px;top:344.75px;font-size:5.1px;color:#8a8a8a;font-weight:400;">발신</div>
<div class="t" style="left:428.3px;top:346.15px;font-size:4.9px;color:#6a6a6a;font-weight:400;">11초</div>
<div class="abs" style="left:474.8px;top:344.70px;width:23.5px;height:8.6px;background:#f2f2f2;border-radius:1px"></div>
<svg class="abs" style="left:477.8px;top:346.50px" width="4.6" height="4.6" viewBox="0 0 10 10"><path d="M2.6 1.2c.5-.3 1.1-.1 1.4.4l.7 1.4c.2.5.1 1-.3 1.3l-.6.5c.4 1 1.2 1.9 2.2 2.4l.5-.6c.3-.4.9-.5 1.3-.3l1.4.7c.5.3.7.9.5 1.4-.4 1-1.5 1.6-2.6 1.3C4.5 9 1.9 6.4 1.3 3.9c-.3-1.1.3-2.2 1.3-2.7z" fill="#555"/></svg>
<div class="t" style="left:485px;top:346.60px;font-size:4.6px;color:#444;font-weight:400;">통화</div>
<div class="t" style="left:511px;top:100.10px;font-size:5.4px;color:#333;font-weight:700;">개인주소록</div>
<svg class="abs" style="left:0;top:90px" width="640" height="20"><circle cx="625" cy="10" r="1.8" fill="none" stroke="#6a6a6a" stroke-width="0.9"/><path d="M621.9 16.4 v-0.9 c0-1.6 1.2-2.9 3-2.9 h0.7" fill="none" stroke="#777" stroke-width="0.9"/><circle cx="627.9" cy="14.3" r="2.3" fill="#4f4f4f"/></svg>
<div class="abs" style="left:505px;top:110.6px;width:130px;height:0.7px;background:#ededed"></div>
<svg class="abs" style="left:512.2px;top:121.3px" width="9.6" height="9.6" viewBox="0 0 12 12"><circle cx="6" cy="6" r="6" fill="#474bc2"/><g transform="translate(1.6,1.9) scale(0.78)"><path d="M2.6 1.2c.5-.3 1.1-.1 1.4.4l.7 1.4c.2.5.1 1-.3 1.3l-.6.5c.4 1 1.2 1.9 2.2 2.4l.5-.6c.3-.4.9-.5 1.3-.3l1.4.7c.5.3.7.9.5 1.4-.4 1-1.5 1.6-2.6 1.3C4.5 9 1.9 6.4 1.3 3.9c-.3-1.1.3-2.2 1.3-2.7z" fill="#fff"/></g><rect x="6.3" y="2.6" width="1.3" height="1.3" fill="#cfd0f5"/><rect x="7.9" y="2.6" width="1.3" height="1.3" fill="#cfd0f5"/><rect x="6.3" y="4.2" width="1.3" height="1.3" fill="#cfd0f5"/><rect x="7.9" y="4.2" width="1.3" height="1.3" fill="#cfd0f5"/></svg>
<div class="t" style="left:528.3px;top:123.60px;font-size:6.0px;color:#7a7a7a;font-weight:400;">홍길동</div>
<div class="abs" style="left:0.3px;top:301px;width:90.6px;height:170px;border-radius:12px;background:#fff;border:1.4px solid #dcdcdc;box-shadow:0 0 3px rgba(0,0,0,0.06)"></div>
<div class="t" style="left:6.5px;top:305.80px;font-size:3.2px;color:#666;font-weight:400;">ᯤ 135 %</div>
<svg class="abs" style="left:56px;top:305px" width="32" height="4"><rect x="0.8" y="0.7" width="2" height="2.2" fill="#444"/><rect x="4.5" y="0.8" width="2" height="2" fill="#777"/><rect x="8.2" y="0.8" width="2" height="2" fill="#777"/><path d="M12 3 l1.6-2.2 l1.6 2.2z" fill="#999"/><path d="M16 3 l2.5-2.2 v2.2z" fill="#888"/><rect x="19.5" y="0.9" width="5" height="1.8" fill="#aaa"/><rect x="25.8" y="0.6" width="2.6" height="2.4" fill="#444"/></svg>
<div class="abs" style="left:4.9px;top:312.4px;width:8px;height:8px;border-radius:50%;background:#d6e2e8"></div>
<div class="abs" style="left:8.1px;top:315.6px;width:1.6px;height:1.6px;border-radius:50%;background:#556"></div>
<div class="t" style="left:17.2px;top:314.73px;font-size:4.75px;color:#4a4a4a;font-weight:400;">PROTeamsPhoneLF</div>
<svg class="abs" style="left:83px;top:313px" width="3" height="7"><circle cx="1.1" cy="0.9" r="0.7" fill="#666"/><circle cx="1.1" cy="3.1" r="0.7" fill="#666"/><circle cx="1.1" cy="5.3" r="0.7" fill="#666"/></svg>
<div class="t" style="left:3.8999999999999986px;width:30px;text-align:center;top:328.90px;font-size:3.8px;color:#2a2a2a;font-weight:700;">다이얼패드</div>
<div class="t" style="left:30.700000000000003px;width:30px;text-align:center;top:328.90px;font-size:3.8px;color:#555;font-weight:400;">통화이력</div>
<div class="t" style="left:57.8px;width:30px;text-align:center;top:328.90px;font-size:3.8px;color:#555;font-weight:400;">개인주소록</div>
<div class="abs" style="left:5.6px;top:335.5px;width:26.6px;height:1.4px;background:#a8a9e1"></div>
<div class="abs" style="left:32.2px;top:336.3px;width:54px;height:0.6px;background:#eeeeee"></div>
<div class="abs" style="left:5.6px;top:341.4px;width:79.9px;height:8px;background:#f0f0f0"></div>
<div class="abs" style="left:5.6px;top:350.2px;width:79.9px;height:1.3px;background:#d6d6d6"></div>
<div class="t" style="left:15.899999999999999px;width:10px;text-align:center;top:360.00px;font-size:5.8px;color:#5d62c0;font-weight:700;">1</div>
<div class="t" style="left:40.4px;width:10px;text-align:center;top:360.00px;font-size:5.8px;color:#5d62c0;font-weight:700;">2</div>
<div class="t" style="left:65.2px;width:10px;text-align:center;top:360.00px;font-size:5.8px;color:#5d62c0;font-weight:700;">3</div>
<div class="t" style="left:15.899999999999999px;width:10px;text-align:center;top:373.50px;font-size:5.8px;color:#5d62c0;font-weight:700;">4</div>
<div class="t" style="left:40.4px;width:10px;text-align:center;top:373.50px;font-size:5.8px;color:#5d62c0;font-weight:700;">5</div>
<div class="t" style="left:65.2px;width:10px;text-align:center;top:373.50px;font-size:5.8px;color:#5d62c0;font-weight:700;">6</div>
<div class="t" style="left:15.899999999999999px;width:10px;text-align:center;top:387.30px;font-size:5.8px;color:#5d62c0;font-weight:700;">7</div>
<div class="t" style="left:40.4px;width:10px;text-align:center;top:387.30px;font-size:5.8px;color:#5d62c0;font-weight:700;">8</div>
<div class="t" style="left:65.2px;width:10px;text-align:center;top:387.30px;font-size:5.8px;color:#5d62c0;font-weight:700;">9</div>
<div class="abs" style="left:20.2px;top:401.40000000000003px;width:1.4px;height:1.4px;border-radius:50%;background:#6d71c6"></div>
<div class="t" style="left:40.4px;width:10px;text-align:center;top:400.80px;font-size:5.8px;color:#5d62c0;font-weight:700;">0</div>
<div class="t" style="left:65.2px;width:10px;text-align:center;top:400.80px;font-size:5.8px;color:#5d62c0;font-weight:700;">#</div>
<svg class="abs" style="left:38.4px;top:426.8px" width="14" height="14" viewBox="0 0 14 14"><circle cx="7" cy="7" r="7" fill="#a9aae4"/><g transform="translate(3.6,3.6) scale(0.7)"><path d="M2.6 1.2c.5-.3 1.1-.1 1.4.4l.7 1.4c.2.5.1 1-.3 1.3l-.6.5c.4 1 1.2 1.9 2.2 2.4l.5-.6c.3-.4.9-.5 1.3-.3l1.4.7c.5.3.7.9.5 1.4-.4 1-1.5 1.6-2.6 1.3C4.5 9 1.9 6.4 1.3 3.9c-.3-1.1.3-2.2 1.3-2.7z" fill="#fff"/></g></svg>
<div class="t" style="left:15.399999999999999px;width:60px;text-align:center;top:447.80px;font-size:3.2px;color:#555;font-weight:400;">내선 전화 번호: 07045062204</div>
</div>
</body></html>
